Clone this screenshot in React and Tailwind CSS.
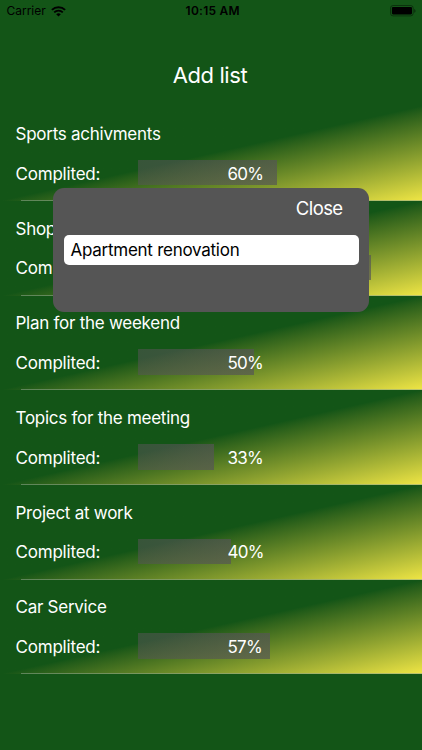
const lists = [
  { title: "Sports achivments", percent: 60 },
  { title: "Shopping list", percent: 100 },
  { title: "Plan for the weekend", percent: 50 },
  { title: "Topics for the meeting", percent: 33 },
  { title: "Project at work", percent: 40 },
  { title: "Car Service", percent: 57 },
];

const BAR_WIDTH = 233;

function WifiIcon() {
  return (
    <svg width="15" height="11" viewBox="0 0 15 11" fill="none" aria-hidden="true">
      <path d="M0.9 3.9a9.4 9.4 0 0 1 13.2 0" stroke="black" strokeWidth="2" />
      <path d="M3.2 6.4a6 6 0 0 1 8.6 0" stroke="black" strokeWidth="1.8" />
      <path d="M5.2 8.3a3.3 3.3 0 0 1 4.6 0L7.5 10.6z" fill="black" />
    </svg>
  );
}

function BatteryIcon() {
  return (
    <svg width="27" height="12" viewBox="0 0 27 12" fill="none" aria-hidden="true">
      <rect x="0.5" y="0.5" width="22.7" height="10.4" rx="2.6" stroke="black" strokeOpacity="0.4" />
      <rect x="1.9" y="1.9" width="20.1" height="7.5" rx="1.1" fill="black" />
      <path d="M24.2 4v3.8c.8-.3 1.3-1 1.3-1.9s-.5-1.6-1.3-1.9z" fill="black" fillOpacity="0.45" />
    </svg>
  );
}

function StatusBar() {
  return (
    <header className="grid h-[22px] grid-cols-3 items-center pl-[6.5px] pr-[5px] text-black">
      <div className="flex items-center gap-[5px]">
        <span className="text-[12px] leading-none tracking-[-0.02px]">Carrier</span>
        <WifiIcon />
      </div>
      <span className="pl-[2px] text-center text-[12px] font-semibold leading-none tracking-[0.25px]">
        10:15 AM
      </span>
      <div className="flex justify-end">
        <BatteryIcon />
      </div>
    </header>
  );
}

function ListRow({ title, percent }) {
  return (
    <li className="relative h-[94.7px] bg-linear-to-br from-[#135517] from-50% to-[#f0e645] pl-[15.5px] text-[17px] leading-5">
      <p className="pt-[17.6px] tracking-[-0.26px]">{title}</p>
      <div className="mt-[16.1px] flex h-[25.5px] items-center">
        <span className="w-[122px] pt-[1.8px] tracking-[-0.2px]">Complited:</span>
        <div
          className="flex h-full items-center bg-linear-to-r from-[#555555]/55 to-[#555555]/70"
          style={{ width: (BAR_WIDTH * percent) / 100 }}
        >
          <span className="ml-[90px] shrink-0 pt-[1.8px] tracking-[-0.75px]">{percent}%</span>
        </div>
      </div>
      <div className="absolute bottom-0 left-[20.5px] right-0 h-px bg-[#8fa88f]/55" />
    </li>
  );
}

function AddListDialog() {
  return (
    <div
      role="dialog"
      aria-label="New list"
      className="absolute left-[53px] top-[187.5px] h-[124.5px] w-[316px] rounded-[11px] bg-[#555555] px-[10.5px]"
    >
      <div className="flex h-[47.5px] items-start justify-end pr-[16px] pt-[8px]">
        <button type="button" className="text-[18.5px] leading-6 tracking-[-0.6px] text-white">
          Close
        </button>
      </div>
      <div className="flex h-[30px] items-center rounded-[5px] bg-white pl-[7px] pt-px text-[17px] tracking-[-0.26px] text-black">
        Apartment renovation
      </div>
    </div>
  );
}

export default function App() {
  return (
    <div className="relative h-[750px] w-[422px] overflow-hidden bg-[#135517] font-['Inter',sans-serif] text-white">
      <StatusBar />
      <h1 className="flex h-[84.3px] items-center justify-center pr-[2px] pt-[21px] text-[22px] leading-7 tracking-[-0.42px]">
        Add list
      </h1>
      <ul>
        {lists.map((list) => (
          <ListRow key={list.title} title={list.title} percent={list.percent} />
        ))}
      </ul>
      <AddListDialog />
    </div>
  );
}
